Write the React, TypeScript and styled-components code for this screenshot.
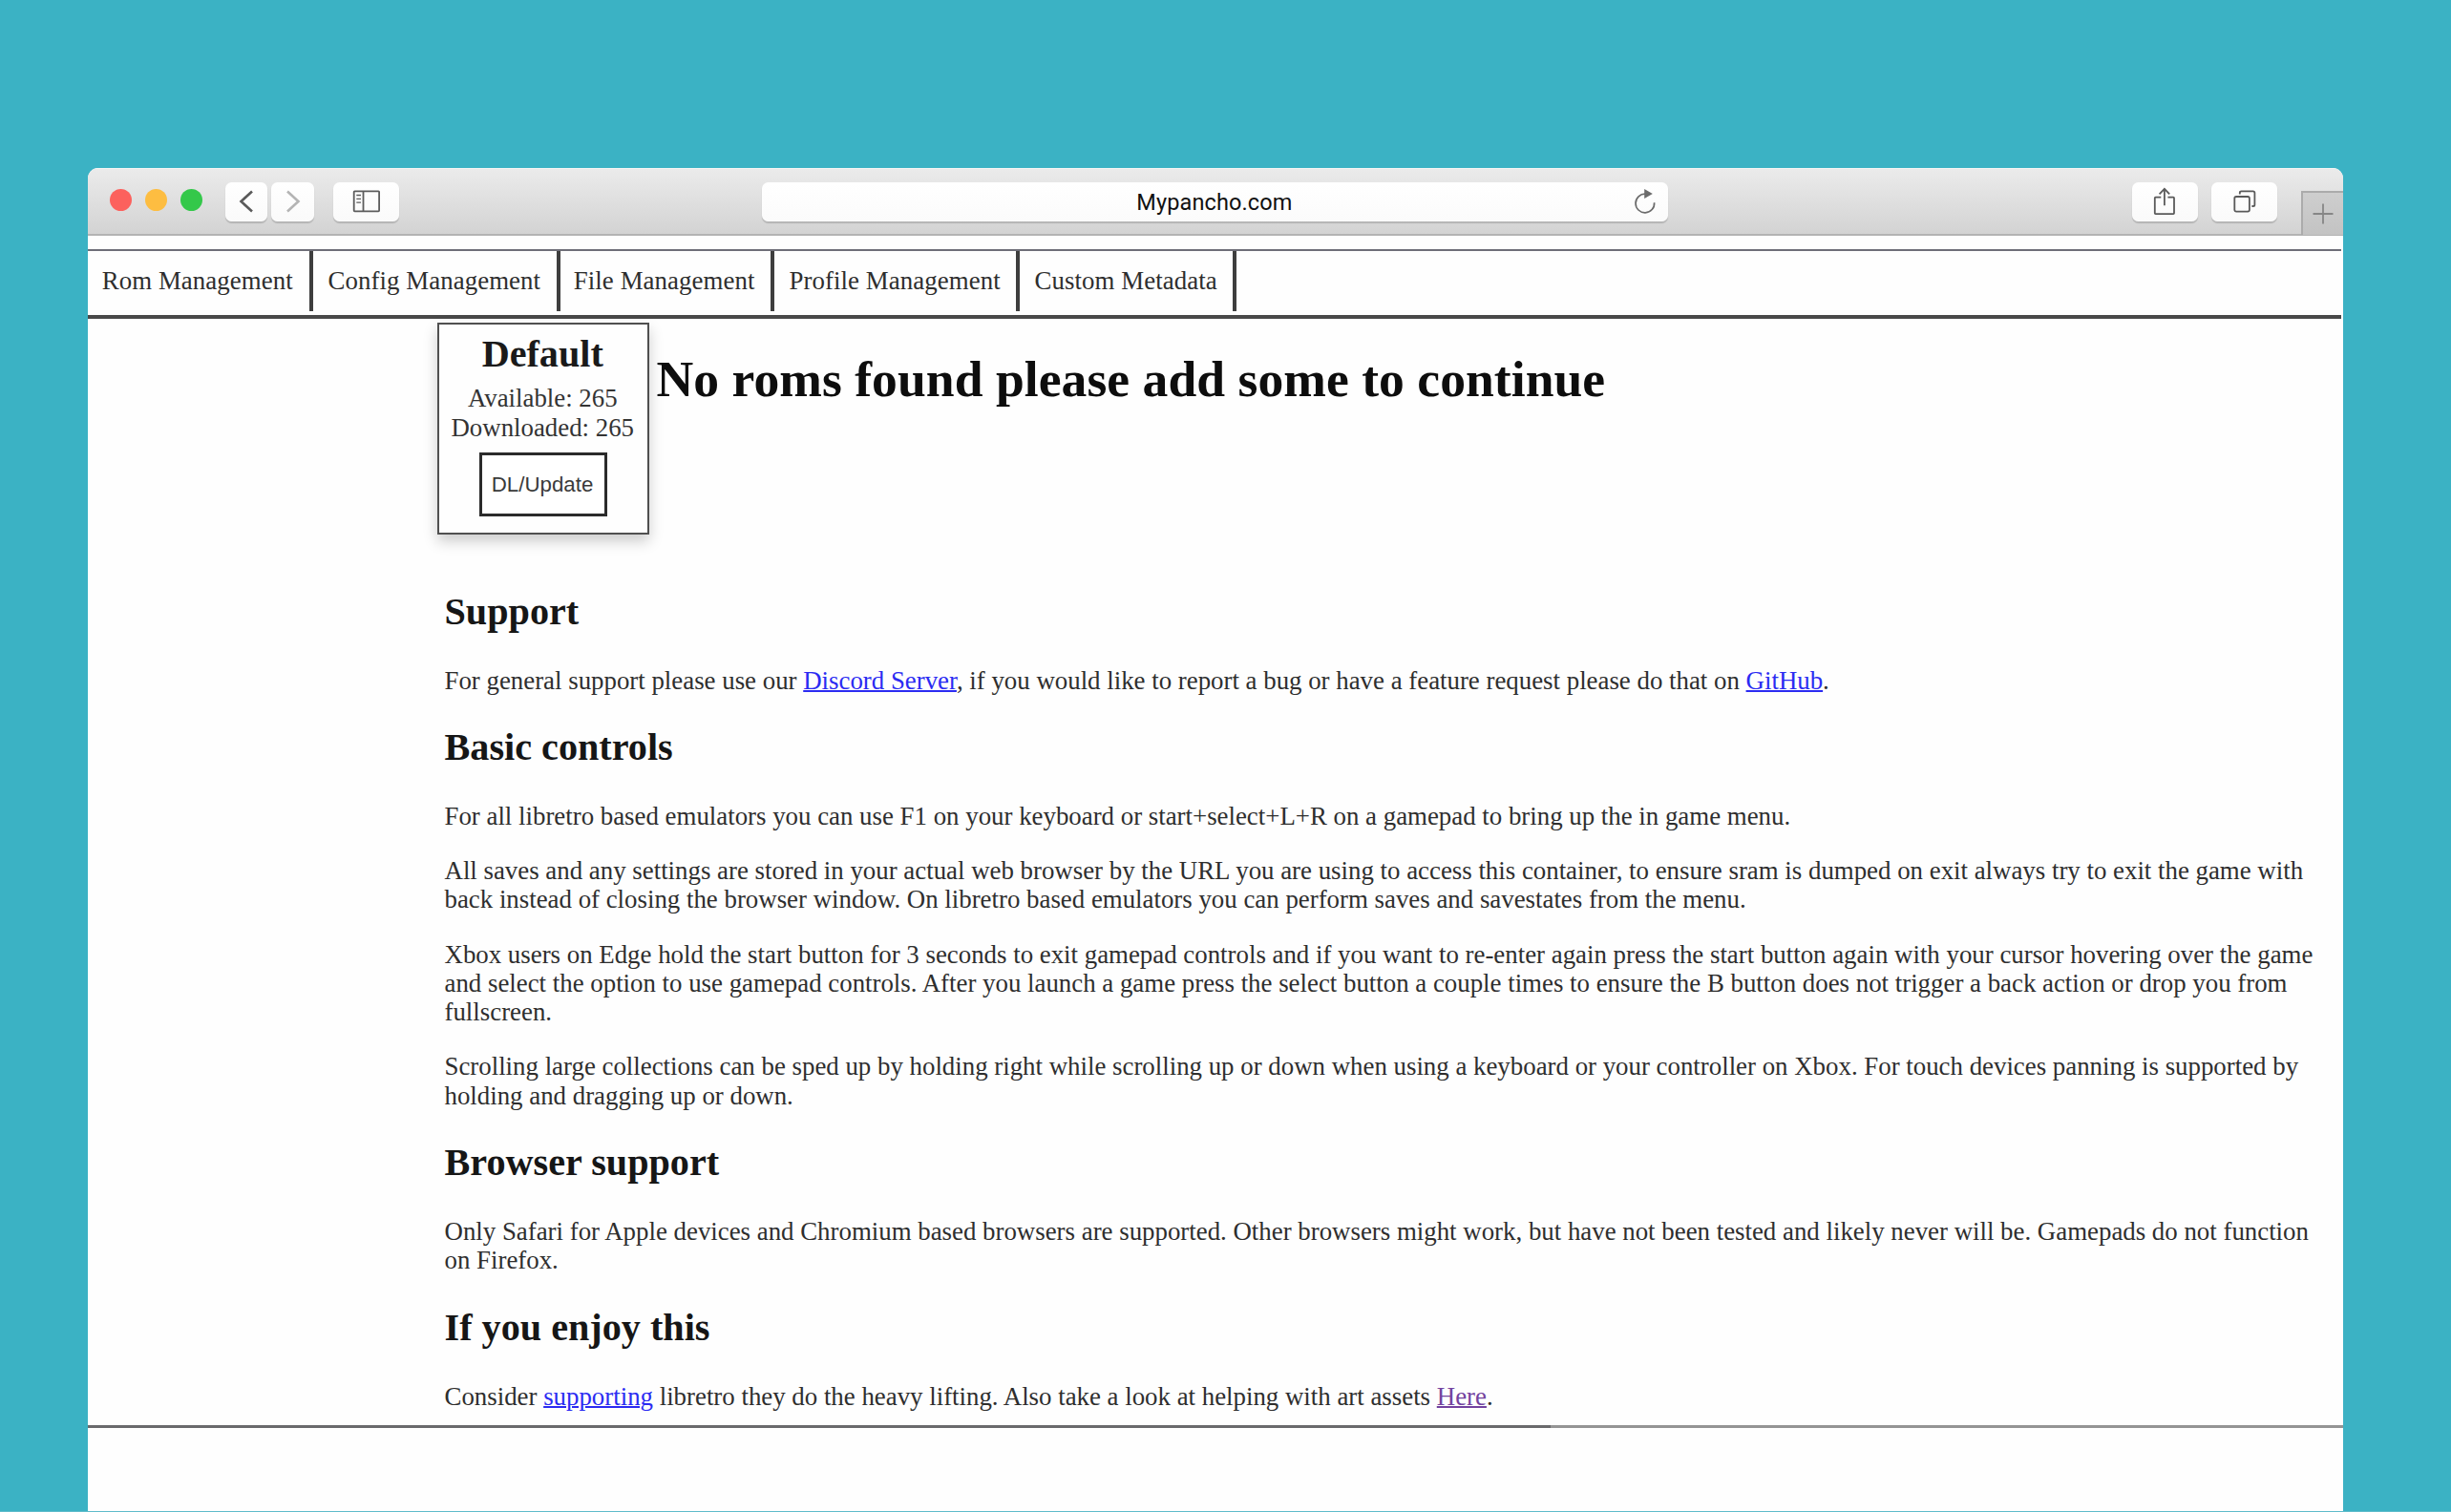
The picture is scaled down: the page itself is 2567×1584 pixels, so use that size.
import React from "react";
import styled, { createGlobalStyle } from "styled-components";

const GlobalStyle = createGlobalStyle`
  *, *::before, *::after { box-sizing: border-box; }
  html, body { margin: 0; padding: 0; background: #3bb2c4; }
  body { overflow: hidden; }
`;

const serif = `"Liberation Serif", "Times New Roman", serif`;
const sans = `"Liberation Sans", Arial, sans-serif`;

const Desktop = styled.div`
  width: 2567px;
  height: 1584px;
  padding: 175.5px 0 0 92px;
  background: #3bb2c4;
  border-bottom: 1px solid #5fbccb;
  overflow: hidden;
`;

const BrowserWindow = styled.div`
  display: flex;
  flex-direction: column;
  width: 2361.7px;
  height: 1408px;
  background: #fefefe;
  border-radius: 11px 11px 0 0;
  overflow: hidden;
`;

const Toolbar = styled.header`
  flex: none;
  display: flex;
  align-items: flex-start;
  height: 71.5px;
  padding-top: 14.2px;
  background: linear-gradient(#ebebeb, #d3d3d3);
  border-top: 1px solid #f4f4f4;
  border-bottom: 2px solid #b3b3b3;
`;

const TrafficLights = styled.div`
  display: flex;
  gap: 14px;
  margin: 7px 23.6px 0 23.3px;
`;

const Light = styled.span<{ $color: string }>`
  width: 23px;
  height: 23px;
  border-radius: 50%;
  background: ${(p) => p.$color};
`;

const ToolButton = styled.button<{ $width: number; $gap?: number }>`
  display: flex;
  align-items: center;
  justify-content: center;
  flex: none;
  width: ${(p) => p.$width}px;
  height: 41px;
  margin: 0 0 0 ${(p) => p.$gap ?? 0}px;
  padding: 0;
  border: 0;
  border-radius: 6.5px;
  background: linear-gradient(#ffffff, #fafafa);
  box-shadow: 0 1.5px 1px rgba(0, 0, 0, 0.16);
`;

const AddressBar = styled.div`
  display: grid;
  grid-template-columns: 1fr auto 1fr;
  align-items: center;
  width: 949px;
  height: 41px;
  margin-left: 380px;
  border-radius: 6.5px;
  background: linear-gradient(#ffffff, #fbfbfb);
  box-shadow: 0 1.5px 1px rgba(0, 0, 0, 0.16);
`;

const Address = styled.span`
  grid-column: 2;
  padding: 1.5px 2px 0 0;
  font: 23.5px/40px Roboto, ${sans};
  letter-spacing: 0.12px;
  color: #111;
`;

const ReloadSlot = styled.span`
  display: flex;
  justify-self: end;
  margin: 0 12.5px 1px 0;
`;

const NewTab = styled.div`
  display: flex;
  align-items: center;
  justify-content: center;
  flex: 1;
  height: 46px;
  margin: 9px 0 0 24.2px;
  background: linear-gradient(#cecece, #c3c3c3);
  border-top: 2px solid #ababab;
  border-left: 2px solid #ababab;
`;

const Page = styled.div`
  display: flex;
  flex-direction: column;
  height: 1234.5px;
  margin-top: 14px;
`;

const Nav = styled.nav`
  flex: none;
  display: flex;
  align-items: flex-start;
  height: 72.5px;
  width: 2360px;
  border-top: 2px solid #6e6e78;
  border-bottom: 4px solid #484848;
`;

const NavItem = styled.a<{ $width: number; $pad?: number }>`
  flex: none;
  width: ${(p) => p.$width}px;
  height: 63px;
  padding-left: ${(p) => p.$pad ?? 15.5}px;
  border-right: 4px solid #3e3e3e;
  font: 26.84px/63px ${serif};
  letter-spacing: 0.08px;
  color: #2e2e2e;
  white-space: nowrap;
`;

const Main = styled.main`
  padding-left: 366px;
`;

const Hero = styled.section`
  display: flex;
  align-items: flex-start;
  padding-top: 4.5px;
`;

const Card = styled.div`
  display: flex;
  flex-direction: column;
  align-items: center;
  width: 222px;
  height: 222px;
  padding: 7.5px 1.5px 0 0;
  border: 2px solid #505050;
  box-shadow: 0 7px 14px rgba(0, 0, 0, 0.2);
  font: 26.84px/31px ${serif};
  color: #333;
`;

const CardTitle = styled.div`
  margin-bottom: 8px;
  font: bold 40.2px/46px ${serif};
  color: #1a1a1a;
`;

const UpdateButton = styled.button`
  width: 134.5px;
  height: 67.5px;
  margin: 10px 0 0 1.5px;
  padding: 2px 2px 0 0;
  border: 3.5px solid #2b2b2b;
  background: #fff;
  font: 22.3px/30px ${sans};
  color: #3a3a3a;
`;

const Headline = styled.h1`
  margin: 28.5px 0 0 7.5px;
  font: bold 53.6px/60px ${serif};
  letter-spacing: 0.04px;
  color: #0d0d0d;
`;

const Article = styled.article`
  width: 1980px;
  padding: 57.5px 0 0 7.5px;
  font: 26.85px/30.3px ${serif};
  color: #2e2e2e;
`;

const Heading = styled.h2`
  margin: 0 0 34px;
  font: bold 40.2px/46px ${serif};
  color: #161616;

  p + & { margin-top: 32.3px; }
`;

const Paragraph = styled.p`
  margin: 0;

  & + & { margin-top: 26.8px; }
`;

const Link = styled.a<{ $visited?: boolean }>`
  color: ${(p) => (p.$visited ? "#73429f" : "#2b2bf2")};
  text-decoration: underline;
  text-decoration-thickness: 2px;
`;

const PageRule = styled.div`
  display: flex;
  flex: none;
  height: 3px;
  margin-top: auto;
`;

const RuleSegment = styled.span<{ $width?: number; $color: string }>`
  flex: ${(p) => (p.$width ? `0 0 ${p.$width}px` : 1)};
  background: ${(p) => p.$color};
`;

const BackIcon = ({ color, flip }: { color: string; flip?: boolean }) => (
  <svg width="16" height="24" viewBox="0 0 16 24" fill="none" stroke={color} strokeWidth="2.6">
    <path d={flip ? "M2 1.5 L13.5 12 L2 22.5" : "M14 1.5 L2.5 12 L14 22.5"} />
  </svg>
);

const SidebarIcon = () => (
  <svg width="30" height="24" viewBox="0 0 30 24" fill="none" stroke="#5c5c5c" strokeWidth="1.8">
    <rect x="1.7" y="1.3" width="26.4" height="21" rx="0.8" />
    <path d="M11.5 1.3V22.3" />
    <path d="M4.3 5.5H9M4.3 9.3H9M4.3 13.1H9" strokeWidth="1.3" />
  </svg>
);

const ReloadIcon = () => (
  <svg width="24" height="26" viewBox="0 0 24 26" fill="none">
    <path d="M21.6 14.2 A9.8 9.8 0 1 1 12.4 5.2" stroke="#6b6b6b" strokeWidth="1.7" />
    <path d="M11.2 0 L19.8 4.9 L11.2 10Z" fill="#6b6b6b" />
  </svg>
);

const ShareIcon = () => (
  <svg width="24" height="30" viewBox="0 0 24 30" fill="none" stroke="#5a5a5a" strokeWidth="1.8">
    <path d="M8.3 10.7H2.6Q1.8 10.7 1.8 11.5V27.3Q1.8 28.1 2.6 28.1H21.2Q22 28.1 22 27.3V11.5Q22 10.7 21.2 10.7H15.4" />
    <path d="M11.9 19.3V2" />
    <path d="M6.6 7.3L11.9 1.9L17.2 7.3" />
  </svg>
);

const TabsIcon = () => (
  <svg width="24" height="24" viewBox="0 0 24 24" fill="none" stroke="#5a5a5a" strokeWidth="1.8">
    <rect x="1.3" y="7" width="15.6" height="15.6" rx="1.8" />
    <path d="M6.8 4.6V3Q6.8 1.3 8.5 1.3H20.6Q22.4 1.3 22.4 3V15.4Q22.4 17 20.8 17H19.4" />
  </svg>
);

const PlusIcon = () => (
  <svg width="22" height="22" viewBox="0 0 22 22" stroke="#868686" strokeWidth="1.8">
    <path d="M11 0.5V21.5M0.5 11H21.5" />
  </svg>
);

export default function App() {
  return (
    <>
      <GlobalStyle />
      <Desktop>
        <BrowserWindow>
          <Toolbar>
            <TrafficLights>
              <Light $color="#fc615d" />
              <Light $color="#fdbd41" />
              <Light $color="#34c84a" />
            </TrafficLights>
            <ToolButton $width={44.5} aria-label="Back">
              <BackIcon color="#5a5a5a" />
            </ToolButton>
            <ToolButton $width={44.5} $gap={4} aria-label="Forward">
              <BackIcon color="#b4b4b4" flip />
            </ToolButton>
            <ToolButton $width={69} $gap={20.5} aria-label="Sidebar">
              <SidebarIcon />
            </ToolButton>
            <AddressBar>
              <Address>Mypancho.com</Address>
              <ReloadSlot>
                <ReloadIcon />
              </ReloadSlot>
            </AddressBar>
            <ToolButton $width={69} $gap={485.5} aria-label="Share">
              <ShareIcon />
            </ToolButton>
            <ToolButton $width={69} $gap={14.5} aria-label="Tabs">
              <TabsIcon />
            </ToolButton>
            <NewTab>
              <PlusIcon />
            </NewTab>
          </Toolbar>

          <Page>
            <Nav>
              <NavItem $width={235.5} $pad={14.7}>Rom Management</NavItem>
              <NavItem $width={259} $pad={16}>Config Management</NavItem>
              <NavItem $width={224.5} $pad={14.3}>File Management</NavItem>
              <NavItem $width={256.5}>Profile Management</NavItem>
              <NavItem $width={227} $pad={16}>Custom Metadata</NavItem>
            </Nav>

            <Main>
              <Hero>
                <Card>
                  <CardTitle>Default</CardTitle>
                  <div>Available: 265</div>
                  <div>Downloaded: 265</div>
                  <UpdateButton>DL/Update</UpdateButton>
                </Card>
                <Headline>No roms found please add some to continue</Headline>
              </Hero>

              <Article>
                <Heading>Support</Heading>
                <Paragraph>
                  For general support please use our <Link>Discord Server</Link>, if you would like to report a bug
                  or have a feature request please do that on <Link>GitHub</Link>.
                </Paragraph>

                <Heading>Basic controls</Heading>
                <Paragraph>
                  For all libretro based emulators you can use F1 on your keyboard or start+select+L+R on a gamepad
                  to bring up the in game menu.
                </Paragraph>
                <Paragraph>
                  All saves and any settings are stored in your actual web browser by the URL you are using to access
                  this container, to ensure sram is dumped on exit always try to exit the game with back instead of
                  closing the browser window. On libretro based emulators you can perform saves and savestates from
                  the menu.
                </Paragraph>
                <Paragraph>
                  Xbox users on Edge hold the start button for 3 seconds to exit gamepad controls and if you want to
                  re-enter again press the start button again with your cursor hovering over the game and select the
                  option to use gamepad controls. After you launch a game press the select button a couple times to
                  ensure the B button does not trigger a back action or drop you from fullscreen.
                </Paragraph>
                <Paragraph>
                  Scrolling large collections can be sped up by holding right while scrolling up or down when using a
                  keyboard or your controller on Xbox. For touch devices panning is supported by holding and dragging
                  up or down.
                </Paragraph>

                <Heading>Browser support</Heading>
                <Paragraph>
                  Only Safari for Apple devices and Chromium based browsers are supported. Other browsers might work,
                  but have not been tested and likely never will be. Gamepads do not function on Firefox.
                </Paragraph>

                <Heading>If you enjoy this</Heading>
                <Paragraph>
                  Consider <Link>supporting</Link> libretro they do the heavy lifting. Also take a look at helping
                  with art assets <Link $visited>Here</Link>.
                </Paragraph>
              </Article>
            </Main>

            <PageRule>
              <RuleSegment $width={1532} $color="#6a6a6c" />
              <RuleSegment $color="#949494" />
            </PageRule>
          </Page>
        </BrowserWindow>
      </Desktop>
    </>
  );
}
